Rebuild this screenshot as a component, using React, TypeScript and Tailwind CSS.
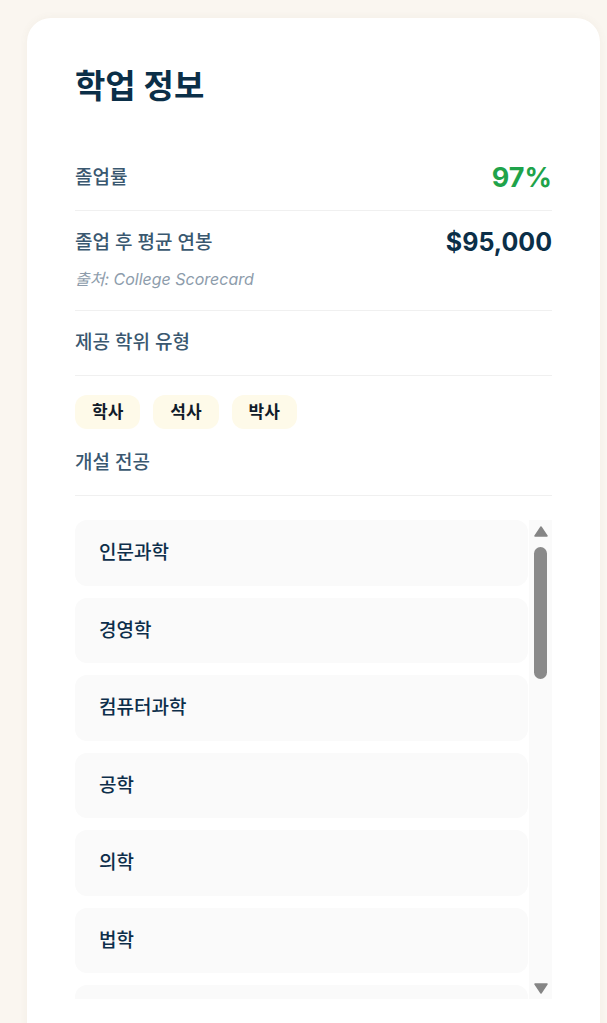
const ko = "font-['Inter','Noto_Sans_CJK_KR',sans-serif]";

const majors = ["인문과학", "경영학", "컴퓨터과학", "공학", "의학", "법학", "교육학", "예술"];
const degrees = ["학사", "석사", "박사"];

function Row({ label, children, note }: { label: string; children?: React.ReactNode; note?: string }) {
  return (
    <div className="border-b border-[#f0f0f0] py-4">
      <div className="flex h-8 items-center justify-between">
        <span className="text-[19px] font-medium text-[#3a5870]">{label}</span>
        {children}
      </div>
      {note && <p className="mt-2 mb-[3px] text-[16px] italic text-[#8d9cab]">{note}</p>}
    </div>
  );
}

function ScrollTrack() {
  return (
    <div className="ml-px flex w-[23px] shrink-0 flex-col items-center bg-[#fafafa] pt-1.5 pb-[5px]">
      <svg width="14" height="11" viewBox="0 0 14 11">
        <path d="M7 1 L13 10 L1 10 Z" fill="#858585" stroke="#858585" strokeWidth="1.5" strokeLinejoin="round" />
      </svg>
      <div className="mt-2.5 h-[132px] w-[13px] rounded-full bg-[#8a8a8a]" />
      <div className="flex-1" />
      <svg width="14" height="11" viewBox="0 0 14 11">
        <path d="M1 1 L13 1 L7 10 Z" fill="#858585" stroke="#858585" strokeWidth="1.5" strokeLinejoin="round" />
      </svg>
    </div>
  );
}

export default function App() {
  return (
    <div className={`min-h-[1023px] bg-[#faf6f0] pt-[18px] ${ko}`}>
      <div className="ml-[27px] w-[573px] rounded-t-[24px] bg-white px-12 pt-12 pb-10 shadow-[0_0_8px_rgba(120,100,60,0.06)]">
        <h2 className="mb-10 text-[33px] leading-10 font-bold text-[#0b2f48]">학업 정보</h2>

        <Row label="졸업률">
          <span className="text-[27px] font-bold text-[#1fa34a]">97%</span>
        </Row>
        <Row label="졸업 후 평균 연봉" note="출처: College Scorecard">
          <span className="text-[25px] font-bold text-[#0b2f48]">$95,000</span>
        </Row>
        <Row label="제공 학위 유형" />

        <div className="mt-[19px] flex gap-[13px]">
          {degrees.map((d) => (
            <span key={d} className="rounded-xl bg-[#fefae9] px-[17px] py-1 text-[17px] leading-[26px] font-semibold text-[#111c2a]">
              {d}
            </span>
          ))}
        </div>

        <div className="mt-0.5">
          <Row label="개설 전공" />
        </div>

        <div className="mt-6 flex h-[479px]">
          <div className="flex flex-1 flex-col gap-3 overflow-hidden">
            {majors.map((m) => (
              <div key={m} className="shrink-0 rounded-xl bg-[#fafafa] px-6 py-5 text-[19px] leading-[25.5px] font-medium text-[#0d2e4a]">
                {m}
              </div>
            ))}
          </div>
          <ScrollTrack />
        </div>
      </div>
    </div>
  );
}
